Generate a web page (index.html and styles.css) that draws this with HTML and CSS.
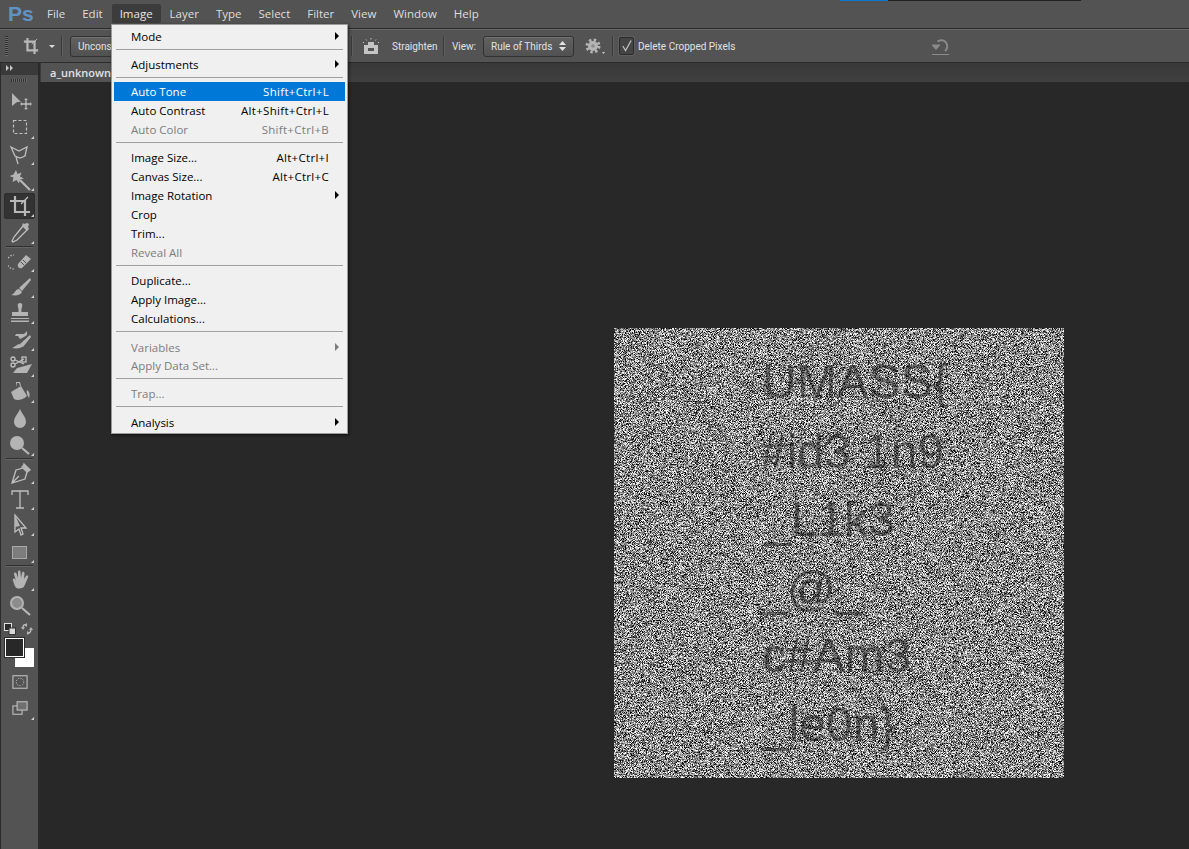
FILE: index.html
```html
<!DOCTYPE html>
<html lang="en">
<head>
<meta charset="utf-8">
<title>Photoshop</title>
<link rel="stylesheet" href="styles.css">
</head>
<body>
<div class="app">
  <header class="menubar">
    <span class="logo">Ps</span>
    <nav class="menus">
      <span class="menu">File</span>
      <span class="menu">Edit</span>
      <span class="menu open">Image</span>
      <span class="menu">Layer</span>
      <span class="menu">Type</span>
      <span class="menu">Select</span>
      <span class="menu">Filter</span>
      <span class="menu">View</span>
      <span class="menu">Window</span>
      <span class="menu">Help</span>
    </nav>
  </header>
  <div class="progress"><span class="progress-fill"></span></div>

  <section class="options">
    <span class="grip"></span>
    <svg class="opt-crop" width="16" height="18" viewBox="0 0 18 20"><path d="M5 1v14h12M1 5h12v14" class="thick"/><path d="M10 8l6-6" class="thin"/></svg>
    <span class="caret"></span>
    <span class="vsep first"></span>
    <span class="btn ratio"><span class="ratio-text">Uncons</span></span>
    <span class="vsep straight"></span>
    <svg class="opt-level" width="20" height="18" viewBox="0 0 20 18"><path d="M3 8h14v9H3zM7 8V5h6v3" class="solid"/><path d="M7 11h6v3H7z" fill="#535353"/><path d="M2 5l1 1M5 2.500l.6 1M10 1v1.500M15 2.500l-.6 1M18 5l-1 1" class="thin"/></svg>
    <span class="opt-text straighten">Straighten</span>
    <span class="vsep"></span>
    <span class="opt-text view">View:</span>
    <span class="btn select"><span>Rule of Thirds</span><svg width="7" height="12" viewBox="0 0 7 12"><path d="M3.500 1L7 5H0zM3.500 11L0 7h7z" fill="#e0e0e0"/></svg></span>
    <svg class="gear" width="20" height="18" viewBox="0 0 20 18"><circle cx="8" cy="9" r="5" class="gear-core"/><circle cx="8" cy="9" r="6" class="gear-teeth"/><circle cx="8" cy="9" r="1.800" class="gear-hole"/><path d="M17 15h3l-1.500 2z" fill="#d0d0d0"/></svg>
    <span class="vsep gearsep"></span>
    <span class="check"><svg width="14" height="14" viewBox="0 0 14 14"><path d="M3 7l3 5 6-11" class="tick"/></svg></span>
    <span class="opt-text del">Delete Cropped Pixels</span>
    <svg class="reset" width="20" height="20" viewBox="0 0 20 20"><path d="M6.500 5.500A6 6 0 1 1 14 15" class="reset-arc"/><path d="M1 9h8L5 13.500zM1 18.500h17" class="reset-base"/></svg>
  </section>

  <main class="main">
    <aside class="tools">
      <div class="panel-head"><svg width="8" height="6" viewBox="0 0 8 6"><path d="M0 0l3 3-3 3zM4 0l3 3-3 3z" fill="#c8c8c8"/></svg></div>
      <div class="panel-grip"></div>

      <div class="tool"><svg viewBox="0 0 24 24"><path d="M4 4v13l5-4h4z" class="f"/><path d="M18 10v10M13 15h10" class="s"/><path d="M18 9l-2 2h4zM18 21l-2-2h4zM12 15l2-2v4zM24 15l-2-2v4z" class="f"/></svg></div>
      <div class="tool more"><svg viewBox="0 0 24 24"><rect x="5.500" y="5.500" width="13" height="13" class="dash"/></svg></div>
      <div class="tool more"><svg viewBox="0 0 24 24"><path d="M3 5l8 4 8-4-2 9-5 2-5-2zM8 15l2 7" class="s"/></svg></div>
      <div class="tool more"><svg viewBox="0 0 24 24"><path d="M8 2l1.500 4 4-1.500-1.500 4 4 2-4 1-1 4-2.500-3.500-4 2 1-4.500-4-1.500 4-1.500z" class="f"/><path d="M12 12l10 10" class="w"/></svg></div>
      <div class="tool more active"><svg viewBox="0 0 24 24"><path d="M7 2v16h15M2 7h15v15" class="w"/><path d="M13 10l7-7" class="s"/></svg></div>
      <div class="tool more"><svg viewBox="0 0 24 24"><path d="M15 5l-9 11-2 4 1 1 4-2 10-10" class="s"/><path d="M14 5l5 5 2-2-1-2 1-3-2-1-3 1-1-1z" class="f"/></svg></div>
      <div class="tool-sep"></div>
      <div class="tool more"><svg viewBox="0 0 24 24"><path d="M6 20a6 6 0 1 1 0-14" class="dots"/><path d="M10 15l8-9 5 4-9 9a3 3 0 0 1-4-4z" class="f"/><path d="M13 13l3 3M15 11l3 3" class="d"/></svg></div>
      <div class="tool more"><svg viewBox="0 0 24 24"><path d="M22 3L11 13l3 3L23 5z" class="f"/><path d="M11 14c-4 0-4 5-8 6 5 1 10 0 11-3z" class="f"/></svg></div>
      <div class="tool more"><svg viewBox="0 0 24 24"><path d="M10 3a2.500 2.500 0 0 1 4 0c1 2-1 4-.5 8H20v4H4v-4h6.500C11 7 9 5 10 3zM3 17h18v1H3zM3 19.500h18v1.500H3z" class="f"/></svg></div>
      <div class="tool more"><svg viewBox="0 0 24 24"><path d="M8 6h8l3-3v4l-3 2-4 2-2-3H7z" class="f"/><path d="M22 7l-10 9 3 3 8-10z" class="f"/><path d="M12 16c-3 0-5 3-8 4 5 1 10 0 11-2z" class="f"/></svg></div>
      <div class="tool more"><svg viewBox="0 0 24 24"><circle cx="5" cy="5" r="2" class="s"/><circle cx="5" cy="11" r="2" class="s"/><path d="M7 6l9 4M7 10l9-5" class="s"/><rect x="14" y="3" width="4" height="5" class="s"/><path d="M9 14L24 10l-5 9H5z" class="f"/></svg></div>
      <div class="tool more"><svg viewBox="0 0 24 24"><path d="M8 2h4l1 4-1 0-1-3h-2l-1 4z" class="f"/><path d="M3 12l10-6 6 10c-4 4-10 5-13 3z" class="f"/><path d="M19 10c3 2 3 5 2 8-1-2-3-5-2-8z" class="f"/></svg></div>
      <div class="tool more"><svg viewBox="0 0 24 24"><path d="M12 3c2 5 6 8 6 13a6 6 0 0 1-12 0c0-5 4-8 6-13z" class="f"/></svg></div>
      <div class="tool more"><svg viewBox="0 0 24 24"><circle cx="9" cy="10" r="7" class="f"/><path d="M14 15l7 6" class="w"/></svg></div>
      <div class="tool-sep"></div>
      <div class="tool more"><svg viewBox="0 0 24 24"><path d="M16 3l6 6-3 2-2 7-13 4 4-13 7-2zM4 22l7-7" class="s"/><path d="M16 3l-3 3 6 6 3-3z" class="f"/></svg></div>
      <div class="tool more"><svg viewBox="0 0 24 24"><path d="M4 8V4h16v4M12 4v17M8 21h8" class="s"/></svg></div>
      <div class="tool more"><svg viewBox="0 0 24 24"><path d="M7 2v17l4-3 2 6 2-1-2-6h5z" class="s"/><path d="M7 2v12l5-1z" class="f"/></svg></div>
      <div class="tool more"><svg viewBox="0 0 24 24"><rect x="4.500" y="6.500" width="14" height="12" class="shape"/></svg></div>
      <div class="tool-sep"></div>
      <div class="tool more"><svg viewBox="0 0 24 24"><path d="M5 13c-1-2 1-3 2-2l1 2-2-7c-.5-2 2-2 2.500-.5L10 10V4c0-2 2.500-2 2.500 0l.5 6 1-5c.5-2 2.500-1.500 2.500.5L16 11l2-3c1-1 3-.5 2 1.500l-3 7c-1 3-3 4-6 4-3 0-4-1-6-8z" class="f"/></svg></div>
      <div class="tool"><svg viewBox="0 0 24 24"><circle cx="9" cy="9" r="6" class="lens"/><path d="M14 14l8 7" class="w"/></svg></div>

      <div class="swap">
        <svg width="12" height="12" viewBox="0 0 12 12"><rect x="0.500" y="0.500" width="7" height="7" class="mini-fg"/><rect x="5" y="5" width="6.500" height="6.500" class="mini-bg"/></svg>
        <svg width="12" height="12" viewBox="0 0 12 12"><path d="M2 4c0-2 2-3 4-2M6 10c3 1 4-2 4-4" class="s"/><path d="M0 4h4L2 7zM6 0v4L3 2zM8 7h4l-2-3zM6 8v4l3-2z" class="f"/></svg>
      </div>
      <div class="colors"><span class="color bg"></span><span class="color fg"></span></div>
      <div class="tool plain mask"><svg viewBox="0 0 24 24"><rect x="3.500" y="4.500" width="17" height="15" class="s"/><circle cx="12" cy="12" r="4.500" class="dots"/></svg></div>
      <div class="tool more plain"><svg viewBox="0 0 24 24"><rect x="3.500" y="9.500" width="11" height="10" class="s"/><rect x="8.500" y="4.500" width="12" height="10" class="screen"/></svg></div>
    </aside>

    <div class="docs">
      <div class="tabs"><span class="tab">a_unknown</span></div>
      <div class="stage">
        <svg class="picture" width="450" height="450" viewBox="0 0 450 450">
          <defs>
            <filter id="noise" x="0" y="0" width="100%" height="100%" color-interpolation-filters="sRGB">
              <feTurbulence type="fractalNoise" baseFrequency="1.37" numOctaves="3" seed="7"/>
              <feColorMatrix type="matrix" values="2.700 0 0 0 -0.820  2.700 0 0 0 -0.820  2.700 0 0 0 -0.820  0 0 0 0 1"/>
            </filter>
          </defs>
          <rect class="noise-fill" width="450" height="450" filter="url(#noise)"/>
          <g class="stego">
            <text x="148" y="70">UMASS{</text>
            <text x="146" y="140">#id3 1n9</text>
            <text x="150" y="208">_L1k3</text>
            <text x="146" y="277">_@_</text>
            <text x="148" y="344">c#Am3</text>
            <text x="148" y="413">_le0n}</text>
          </g>
        </svg>
      </div>
    </div>
  </main>

  <div class="dropdown">
    <div class="row sub"><span>Mode</span></div>
    <div class="sep"></div>
    <div class="row sub"><span>Adjustments</span></div>
    <div class="sep tight"></div>
    <div class="row hot"><span>Auto Tone</span><span class="keys">Shift+Ctrl+L</span></div>
    <div class="row"><span>Auto Contrast</span><span class="keys">Alt+Shift+Ctrl+L</span></div>
    <div class="row off"><span>Auto Color</span><span class="keys">Shift+Ctrl+B</span></div>
    <div class="sep"></div>
    <div class="row"><span>Image Size...</span><span class="keys">Alt+Ctrl+I</span></div>
    <div class="row"><span>Canvas Size...</span><span class="keys">Alt+Ctrl+C</span></div>
    <div class="row sub"><span>Image Rotation</span></div>
    <div class="row"><span>Crop</span></div>
    <div class="row"><span>Trim...</span></div>
    <div class="row off"><span>Reveal All</span></div>
    <div class="sep"></div>
    <div class="row"><span>Duplicate...</span></div>
    <div class="row"><span>Apply Image...</span></div>
    <div class="row"><span>Calculations...</span></div>
    <div class="sep wide"></div>
    <div class="row sub off short"><span>Variables</span></div>
    <div class="row off"><span>Apply Data Set...</span></div>
    <div class="sep"></div>
    <div class="row off"><span>Trap...</span></div>
    <div class="sep wide"></div>
    <div class="row sub"><span>Analysis</span></div>
  </div>
</div>
</body>
</html>
```
FILE: styles.css
```css
* { box-sizing: border-box; }
html, body { margin: 0; height: 100%; overflow: hidden; background: #282828; }
body { font-family: "Open Sans", "Noto Sans", sans-serif; font-size: 11.500px; }
.app { position: relative; display: flex; flex-direction: column; width: 100%; height: 849px; overflow: hidden; }

/* menu bar */
.menubar { display: flex; align-items: center; height: 29px; padding: 0 0 1px 8px; background: #535353; border-bottom: 1px solid #2c2c2c; flex: none; }
.logo { width: 31px; font: bold 21px/24px "Liberation Sans", sans-serif; color: #5f93c6; }
.menus { display: flex; gap: 0; }
.menu { padding: 0 8px; margin-right: 1px; height: 19px; line-height: 19px; color: #dedede; border-radius: 2px; }
.menu.open { background: #3c3c3c; color: #e6e6e6; padding: 0 8px; margin-right: 1px; }
.progress { position: absolute; left: 840px; top: 0; width: 241px; height: 1px; background: #222; }
.progress-fill { display: block; width: 48px; height: 1px; background: #0f76d1; }

/* options bar */
.options { display: flex; align-items: center; height: 34px; flex: none; background: #535353; border-top: 1px solid #696969; border-bottom: 1px solid #2c2c2c; }
.grip { width: 3px; height: 20px; margin-left: 5px; background: repeating-linear-gradient(#2f2f2f 0 1px, #6a6a6a 1px 2px); }
.opt-crop { margin-left: 15px; flex: none; }
.caret { width: 0; height: 0; margin-left: 10px; border: 3px solid transparent; border-top: 3px solid #dcdcdc; border-bottom: 0; border-left-width: 3.500px; border-right-width: 3.500px; }
.vsep { width: 1px; height: 20px; background: #3a3a3a; box-shadow: 1px 0 0 #5f5f5f; margin: 0 7px; flex: none; }
.vsep.first { margin: 0 8px 0 6px; }
.btn { display: flex; align-items: center; height: 21px; background: linear-gradient(#616161, #515151); border: 1px solid #323232; border-radius: 3px; box-shadow: inset 0 1px 0 #727272; font-family: "Roboto", sans-serif; font-size: 10px; color: #e2e2e2; }
.ratio { width: 199px; padding-left: 7px; }
.ratio-text { white-space: nowrap; }
.vsep.straight { margin-left: 82px; margin-right: 9px; }
.opt-level { flex: none; }
.opt-text { font-family: "Roboto", sans-serif; font-size: 10px; color: #e2e2e2; white-space: nowrap; }
.straighten { margin-left: 11px; width: 44px; }
.view { width: 23px; margin-left: 1px; }
.select { width: 91px; padding: 0 7px; justify-content: space-between; margin-left: 8px; }
.gear { margin-left: 11px; flex: none; }
.gear-core { fill: #b4b4b4; }
.gear-teeth { fill: none; stroke: #b4b4b4; stroke-width: 3; stroke-dasharray: 2.400 2.310; }
.gear-hole { fill: #8c8c8c; }
.vsep.gearsep { margin: 0 6px 0 7px; }
.check { display: flex; width: 15px; height: 18px; flex: none; align-items: center; justify-content: center; background: #444; border: 1px solid #2b2b2b; border-radius: 2px; box-shadow: 0 0 0 1px #5f5f5f; }
.tick { fill: none; stroke: #c4c4c4; stroke-width: 1.300; }
.del { margin-left: 4px; width: 95px; }
.reset { margin-left: 198px; flex: none; }
.reset-arc { fill: none; stroke: #8a8a8a; stroke-width: 2; }
.reset-base { fill: #8a8a8a; stroke: #8a8a8a; stroke-width: 1; }
.thick { fill: none; stroke: #b8b8b8; stroke-width: 2.500; }
.thin { fill: none; stroke: #c4c4c4; stroke-width: 1; }
.solid { fill: #c4c4c4; }

/* tool panel */
.main { display: flex; flex: 1; min-height: 0; }
.tools { width: 40px; flex: none; padding: 0 2px 0 2px; background: #535353; border-left: 1px solid #2c2c2c; border-right: 2px solid #2a2a2a; display: flex; flex-direction: column; }
.panel-head { height: 12px; margin: 0 -2px; padding: 2px 0 0 5px; background: #3a3a3a; line-height: 0; }
.panel-grip { height: 3px; margin: 4px 9px 6px 8px; background: repeating-linear-gradient(90deg, #2f2f2f 0 1px, #6a6a6a 1px 2px); flex: none; }
.tool { position: relative; display: flex; align-items: center; justify-content: center; height: 26.300px; flex: none; margin: 0 1px; }
.tool svg { width: 24px; height: 24px; }
.tool.more::after { content: ""; position: absolute; right: 1px; bottom: 2px; border-style: solid; border-width: 0 0 3.500px 3.500px; border-color: transparent transparent #d2d2d2 transparent; }
.tool.active { background: #333; border-radius: 3px; box-shadow: inset 0 0 0 1px #2d2d2d; }
.tool.plain svg { width: 20px; height: 20px; }
.tool.mask { margin-top: 1px; }
.tool-sep { height: 1px; margin: 0.300px 3px 0.400px; background: #303030; box-shadow: 0 1px 0 #646464; flex: none; }
.f { fill: #b4b4b4; }
.s { fill: none; stroke: #c0c0c0; stroke-width: 1.300; }
.w { fill: none; stroke: #b8b8b8; stroke-width: 2.200; }
.d { fill: none; stroke: #535353; stroke-width: 1; }
.dash { fill: none; stroke: #c0c0c0; stroke-width: 1.200; stroke-dasharray: 3 2; }
.dots { fill: none; stroke: #c0c0c0; stroke-width: 1.200; stroke-dasharray: 1.500 1.500; }
.lens { fill: #8c8c8c; stroke: #b4b4b4; stroke-width: 2; }
.shape { fill: #7d7d7d; stroke: #a8a8a8; stroke-width: 1; }
.screen { fill: #6f6f6f; stroke: #c0c0c0; stroke-width: 1.300; }
.swap { display: flex; justify-content: space-between; height: 15px; padding: 2px 3px 0 1px; margin-top: 2px; flex: none; }
.mini-fg { fill: #2a2a2a; stroke: #e0e0e0; stroke-width: 1; }
.mini-bg { fill: #d8d8d8; stroke: #333; stroke-width: 1; }
.colors { position: relative; height: 30px; margin: 2px 0 0 2px; flex: none; }
.color { position: absolute; width: 19px; height: 19px; border: 1px solid #fff; }
.color.fg { left: 0; top: 0; background: #282828; box-shadow: 0 0 0 1px #2c2c2c; }
.color.bg { left: 10px; top: 10px; background: #fff; }

/* documents */
.docs { flex: 1; display: flex; flex-direction: column; min-width: 0; }
.tabs { height: 19px; padding-left: 1px; flex: none; background: linear-gradient(#383838, #404040); display: flex; }
.tab { width: 70px; padding-left: 9px; line-height: 19px; background: #535353; color: #e2e2e2; font-weight: 600; font-size: 11px; white-space: nowrap; overflow: hidden; }
.stage { flex: 1; background: #282828; padding: 246px 0 0 574px; }
.picture { display: block; }
.noise-fill { fill: #808080; }
.stego { font: 48px "Liberation Sans", sans-serif; fill: #141414; opacity: 0.5; }

/* dropdown */
.dropdown { position: absolute; left: 111px; top: 24px; width: 237px; height: 410px; padding: 2px 2px 0; background: #f0f0f0; border: 1px solid #9a9a9a; box-shadow: 1px 1px 3px rgba(0,0,0,0.55); color: #000; }
.row { position: relative; display: flex; justify-content: space-between; height: 19px; line-height: 19px; padding: 0 16px 0 17px; white-space: nowrap; }
.row.short { height: 18px; }
.row.hot { background: #0078d7; color: #fff; }
.row.off { color: #7c7c7c; }
.row.sub::after { content: ""; position: absolute; right: 6px; top: 5px; border-style: solid; border-width: 4px 0 4px 4px; border-color: transparent transparent transparent #000; }
.row.sub.off::after { border-left-color: #7c7c7c; }
.keys { letter-spacing: 0.300px; }
.sep { height: 1px; margin: 3px 2px 5px 2px; background: #a0a0a0; }
.sep.tight { margin-bottom: 4px; }
.sep.wide { margin-bottom: 6px; }
```
